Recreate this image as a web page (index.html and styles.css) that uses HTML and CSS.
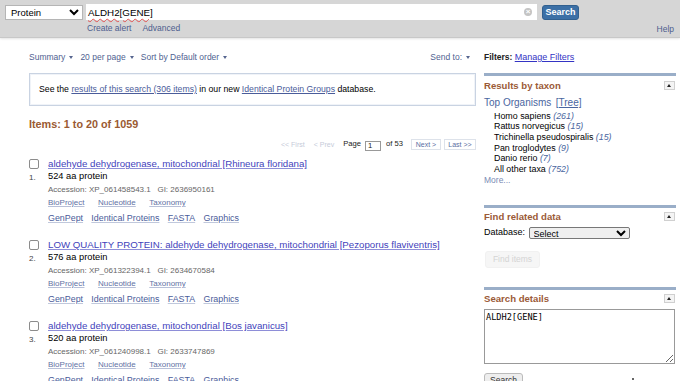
FILE: index.html
```html
<!DOCTYPE html>
<html lang="en">
<head>
  <meta charset="UTF-8" />
  <title>ALDH2[GENE] - Protein</title>
  <link rel="stylesheet" href="styles.css">
</head>
<body>
  <div class="topbar">
    <div class="search-row">
      <select class="db-select">
        <option>Protein</option>
      </select>
      <div class="term-box">
        <span class="term">ALDH2[GENE]</span>
        <span class="clear">&#215;</span>
      </div>
      <button class="search-btn">Search</button>
    </div>
    <div class="sub-row">
      <a href="#">Create alert</a>
      <a href="#">Advanced</a>
      <a href="#" class="help">Help</a>
    </div>
  </div>

  <div class="page">
    <div class="content">
      <div class="display-bar">
        <a href="#" class="drop">Summary</a>
        <a href="#" class="drop">20 per page</a>
        <a href="#" class="drop">Sort by Default order</a>
        <a href="#" class="drop send">Send to:</a>
      </div>

      <div class="notice">
        See the <a href="#">results of this search (306 items)</a> in our new <a href="#">Identical Protein Groups</a> database.
      </div>

      <h3 class="items">Items: 1 to 20 of 1059</h3>

      <div class="pager">
        <span class="off">&lt;&lt; First</span>
        <span class="off">&lt; Prev</span>
        <span class="pg">Page <span class="page-num">1</span> of 53</span>
        <a href="#" class="pbtn next">Next &gt;</a>
        <a href="#" class="pbtn last">Last &gt;&gt;</a>
      </div>

      <div class="rslt">
        <div class="rnum"><span class="cb"></span><span>1.</span></div>
        <div class="rbody">
          <a href="#" class="rtitle">aldehyde dehydrogenase, mitochondrial [Rhineura floridana]</a>
          <div class="rdesc">524 aa protein</div>
          <div class="rmeta">Accession: XP_061458543.1&nbsp;&nbsp; GI: 2636950161</div>
          <div class="rlinks"><a href="#">BioProject</a><a href="#">Nucleotide</a><a href="#">Taxonomy</a></div>
          <div class="rlinks2"><a href="#">GenPept</a><a href="#">Identical Proteins</a><a href="#">FASTA</a><a href="#">Graphics</a></div>
        </div>
      </div>

      <div class="rslt">
        <div class="rnum"><span class="cb"></span><span>2.</span></div>
        <div class="rbody">
          <a href="#" class="rtitle">LOW QUALITY PROTEIN: aldehyde dehydrogenase, mitochondrial [Pezoporus flaviventris]</a>
          <div class="rdesc">576 aa protein</div>
          <div class="rmeta">Accession: XP_061322394.1&nbsp;&nbsp; GI: 2634670584</div>
          <div class="rlinks"><a href="#">BioProject</a><a href="#">Nucleotide</a><a href="#">Taxonomy</a></div>
          <div class="rlinks2"><a href="#">GenPept</a><a href="#">Identical Proteins</a><a href="#">FASTA</a><a href="#">Graphics</a></div>
        </div>
      </div>

      <div class="rslt">
        <div class="rnum"><span class="cb"></span><span>3.</span></div>
        <div class="rbody">
          <a href="#" class="rtitle">aldehyde dehydrogenase, mitochondrial [Bos javanicus]</a>
          <div class="rdesc">520 aa protein</div>
          <div class="rmeta">Accession: XP_061240998.1&nbsp;&nbsp; GI: 2633747869</div>
          <div class="rlinks"><a href="#">BioProject</a><a href="#">Nucleotide</a><a href="#">Taxonomy</a></div>
          <div class="rlinks2"><a href="#">GenPept</a><a href="#">Identical Proteins</a><a href="#">FASTA</a><a href="#">Graphics</a></div>
        </div>
      </div>
    </div>

    <div class="sidebar">
      <div class="filters"><b>Filters:</b> <a href="#">Manage Filters</a></div>

      <div class="portlet">
        <div class="phead"><span>Results by taxon</span><span class="tog"></span></div>
        <div class="taxa">
          <div class="top-org"><a href="#">Top Organisms</a> <a href="#" class="tree">[Tree]</a></div>
          <ul>
            <li>Homo sapiens <i>(261)</i></li>
            <li>Rattus norvegicus <i>(15)</i></li>
            <li>Trichinella pseudospiralis <i>(15)</i></li>
            <li>Pan troglodytes <i>(9)</i></li>
            <li>Danio rerio <i>(7)</i></li>
            <li>All other taxa <i>(752)</i></li>
          </ul>
          <a href="#" class="more">More...</a>
        </div>
      </div>

      <div class="portlet">
        <div class="phead"><span>Find related data</span><span class="tog"></span></div>
        <div class="related">
          <label>Database: <select class="rel-select"><option>Select</option></select></label>
        </div>
        <button class="find-btn" disabled>Find items</button>
      </div>

      <div class="portlet">
        <div class="phead"><span>Search details</span><span class="tog"></span></div>
        <textarea class="details">ALDH2[GENE]</textarea>
        <div class="detail-foot">
          <button class="grey-btn">Search</button>
          <span class="spin"></span>
        </div>
      </div>
    </div>
  </div>
</body>
</html>
```

FILE: styles.css
```css
body { margin: 0; font-family: "Liberation Sans", Arial, sans-serif; color: #000; background: #fff; overflow: hidden; }
a { color: #4f5f91; text-decoration: none; }

/* search header */
.topbar { height: 37px; background: #d6d6d6; border-bottom: 1px solid #c8c8c8; box-shadow: 0 1px 2px #e4e4e4; }
.search-row { display: flex; align-items: center; padding: 4px 0 0 5px; height: 16px; }
.db-select { width: 78px; height: 15px; font: 9.5px "Liberation Sans", sans-serif; border: 1px solid #b5b5b5; background: #fff; padding: 0 0 0 1px; margin-right: 3px; }
.term-box { width: 451px; height: 16px; background: #fff; display: flex; align-items: center; justify-content: space-between; box-sizing: border-box; padding: 0 5px 0 2px; }
.term { font-size: 9.8px; text-decoration: underline wavy #e05050; text-decoration-thickness: 1px; text-underline-offset: 2px; }
.clear { width: 8px; height: 8px; border-radius: 50%; background: #c4c4c4; color: #fff; font-size: 8px; line-height: 8px; text-align: center; font-weight: bold; }
.search-btn { margin-left: 5px; width: 37px; height: 15px; padding: 0; background: #3c70a6; color: #fff; font: bold 9px "Liberation Sans", sans-serif; border: 1px solid #31608f; border-radius: 3px; }
.sub-row { display: flex; font-size: 8.5px; line-height: 12px; padding: 2px 0 0 87px; gap: 11px; }
.sub-row a { color: #4d5d8e; }
.sub-row .help { margin-left: auto; margin-right: 6px; padding-top: 1px; }

.page { display: flex; padding-top: 13px; }
.content { width: 447px; margin-left: 29px; }
.sidebar { width: 192px; margin-left: 8px; }

/* display settings */
.display-bar { display: flex; font-size: 8.5px; line-height: 12px; gap: 7px; }
.display-bar a { color: #4f5f91; }
.display-bar .drop::after { content: ""; display: inline-block; border: 2.5px solid transparent; border-top: 3px solid #56658f; border-bottom: 0; margin-left: 4px; vertical-align: 1px; }
.display-bar .send { margin-left: auto; margin-right: 6px; }

.notice { margin-top: 10px; border: 1px solid #c9d3e2; box-shadow: inset 0 0 0 1px #f0f3f8; padding: 10px 9px; font-size: 8.7px; line-height: 11px; }
.notice a { color: #4a5c9a; text-decoration: underline; }

.items { margin: 11px 0 0; font-size: 10.8px; line-height: 14px; color: #9a5a32; }

/* paging */
.pager { display: flex; justify-content: flex-end; align-items: center; height: 11px; font-size: 7px; margin-top: 8px; white-space: nowrap; }
.pager .off { color: #c6cbd9; margin-right: 9px; }
.pg { font-size: 7.6px; color: #222; margin-right: 5px; }
.page-num { display: inline-block; box-sizing: border-box; width: 16px; height: 10px; line-height: 8px; border: 1px solid #999; padding-left: 2px; margin: 0 3px 0 2px; vertical-align: -2px; }
.pbtn { border: 1px solid #dde2ea; height: 11px; box-sizing: border-box; line-height: 9px; padding: 0; text-align: center; margin-left: 3px; color: #5a6ea2; }
.pbtn.next { width: 30px; }
.pbtn.last { width: 32px; }

/* results */
.rslt { display: flex; margin-top: 7px; }
.rslt + .rslt { margin-top: 13px; }
.rnum { width: 19px; display: flex; flex-direction: column; font-size: 8px; color: #444; }
.cb { width: 8px; height: 8px; border: 1px solid #8c8c8c; border-radius: 2px; margin-top: 2px; margin-bottom: 4px; }
.rtitle { display: block; font-size: 9.7px; line-height: 13px; color: #4242bb; text-decoration: underline; text-decoration-color: #8e8ed8; }
.rdesc { font-size: 9.3px; line-height: 13px; }
.rmeta { font-size: 8px; line-height: 14px; color: #666; }
.rlinks { font-size: 8px; line-height: 12px; display: flex; gap: 13.5px; }
.rlinks a { text-decoration: underline; color: #6271a4; text-decoration-color: #b8c0d8; }
.rlinks2 { font-size: 8.9px; line-height: 13px; display: flex; gap: 8.3px; margin-top: 3px; }
.rlinks2 a { color: #4a5c9a; text-decoration: underline; text-decoration-color: #c0c8dc; }

/* sidebar */
.filters { font-size: 8.5px; line-height: 12px; }
.filters b { color: #222; }
.filters a { color: #3434c4; text-decoration: underline; font-size: 9px; }

.portlet { border-top: 3px solid #9aaec8; margin-top: 10px; padding-top: 3px; }
.portlet + .portlet { margin-top: 19px; }
.phead { display: flex; justify-content: space-between; align-items: center; height: 12px; font-size: 9.6px; font-weight: bold; color: #9b5a37; }
.tog { width: 9px; height: 7px; border: 1px solid #d0d0d0; background: #f4f4f4; position: relative; margin-right: 1px; }
.tog::after { content: ""; position: absolute; left: 2px; top: 2px; border: 2.5px solid transparent; border-bottom: 3px solid #222; border-top: 0; }

.taxa { margin-top: 6px; font-size: 8.9px; }
.top-org { line-height: 12px; }
.top-org a { color: #4a66a0; font-size: 10px; }
.top-org .tree { text-decoration: underline; margin-left: 2px; }
.taxa ul { list-style: none; margin: 1.6px 0 0; padding-left: 10px; }
.taxa li { line-height: 10.7px; }
.taxa i { color: #4a66a0; }
.more { display: block; color: #7a8bb4; font-size: 8.5px; line-height: 11px; }

.related { font-size: 9px; line-height: 13px; margin-top: 3px; }
.rel-select { width: 101px; height: 12px; font: 9px "Liberation Sans", sans-serif; margin-left: 1px; padding: 0; vertical-align: -2px; border: 1px solid #777; border-radius: 2px; }
.find-btn { display: block; margin: 12px 0 0 1px; width: 55px; height: 17px; font: 8.5px "Liberation Sans", sans-serif; color: #d4d4d4; background: #f6f6f6; border: 1px solid #f1f1f1; border-radius: 3px; padding: 0; }

.details { display: block; width: 191px; height: 55px; box-sizing: border-box; margin-top: 4px; font: 8.6px "DejaVu Sans Mono", monospace; border: 1px solid #999; padding: 2px 1px; resize: both; }
.detail-foot { display: flex; align-items: flex-start; margin-top: 9px; }
.grey-btn { width: 39px; height: 15px; font: 8.5px "Liberation Sans", sans-serif; color: #333; background: #eee; border: 1px solid #bbb; border-radius: 3px; padding: 0; }
.spin { width: 2px; height: 2px; background: #666; margin: 5px 0 0 109px; }
```
